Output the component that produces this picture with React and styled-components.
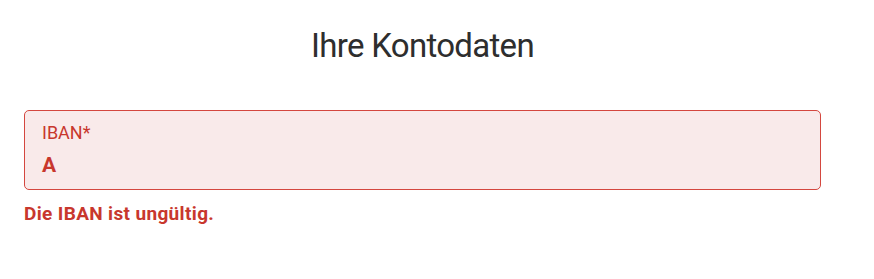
import React from "react";
import styled, { createGlobalStyle } from "styled-components";

const GlobalStyle = createGlobalStyle`
  html, body {
    margin: 0;
    padding: 0;
    background: #ffffff;
    font-family: Roboto, "Liberation Sans", sans-serif;
  }
`;

const Page = styled.div`
  width: 874px;
  padding: 24px 53px 0 24px;
  box-sizing: border-box;
`;

const Title = styled.h2`
  margin: 0 0 42px 0;
  text-align: center;
  font-size: 33px;
  font-weight: 400;
  line-height: 44px;
  letter-spacing: -0.7px;
  color: #2e2e2e;
`;

const Field = styled.div`
  display: flex;
  flex-direction: column;
  height: 80px;
  box-sizing: border-box;
  padding: 11px 17px 0;
  border: 1.5px solid ${(p) => (p.error ? "#d4473f" : "#cfcfcf")};
  border-radius: 5px;
  background: ${(p) => (p.error ? "#f9eaea" : "#ffffff")};
`;

const Label = styled.label`
  font-size: 18px;
  line-height: 22px;
  color: #c8372d;
`;

const Value = styled.div`
  margin-top: 9px;
  font-size: 21px;
  line-height: 24px;
  font-weight: 700;
  color: #c8372d;
`;

const ErrorText = styled.div`
  margin-top: 13px;
  font-size: 19px;
  line-height: 22px;
  font-weight: 700;
  letter-spacing: 0.35px;
  color: #c8372d;
`;

export default function App() {
  return (
    <>
      <GlobalStyle />
      <Page>
        <Title>Ihre Kontodaten</Title>
        <Field error>
          <Label>IBAN*</Label>
          <Value>A</Value>
        </Field>
        <ErrorText>Die IBAN ist ungültig.</ErrorText>
      </Page>
    </>
  );
}
